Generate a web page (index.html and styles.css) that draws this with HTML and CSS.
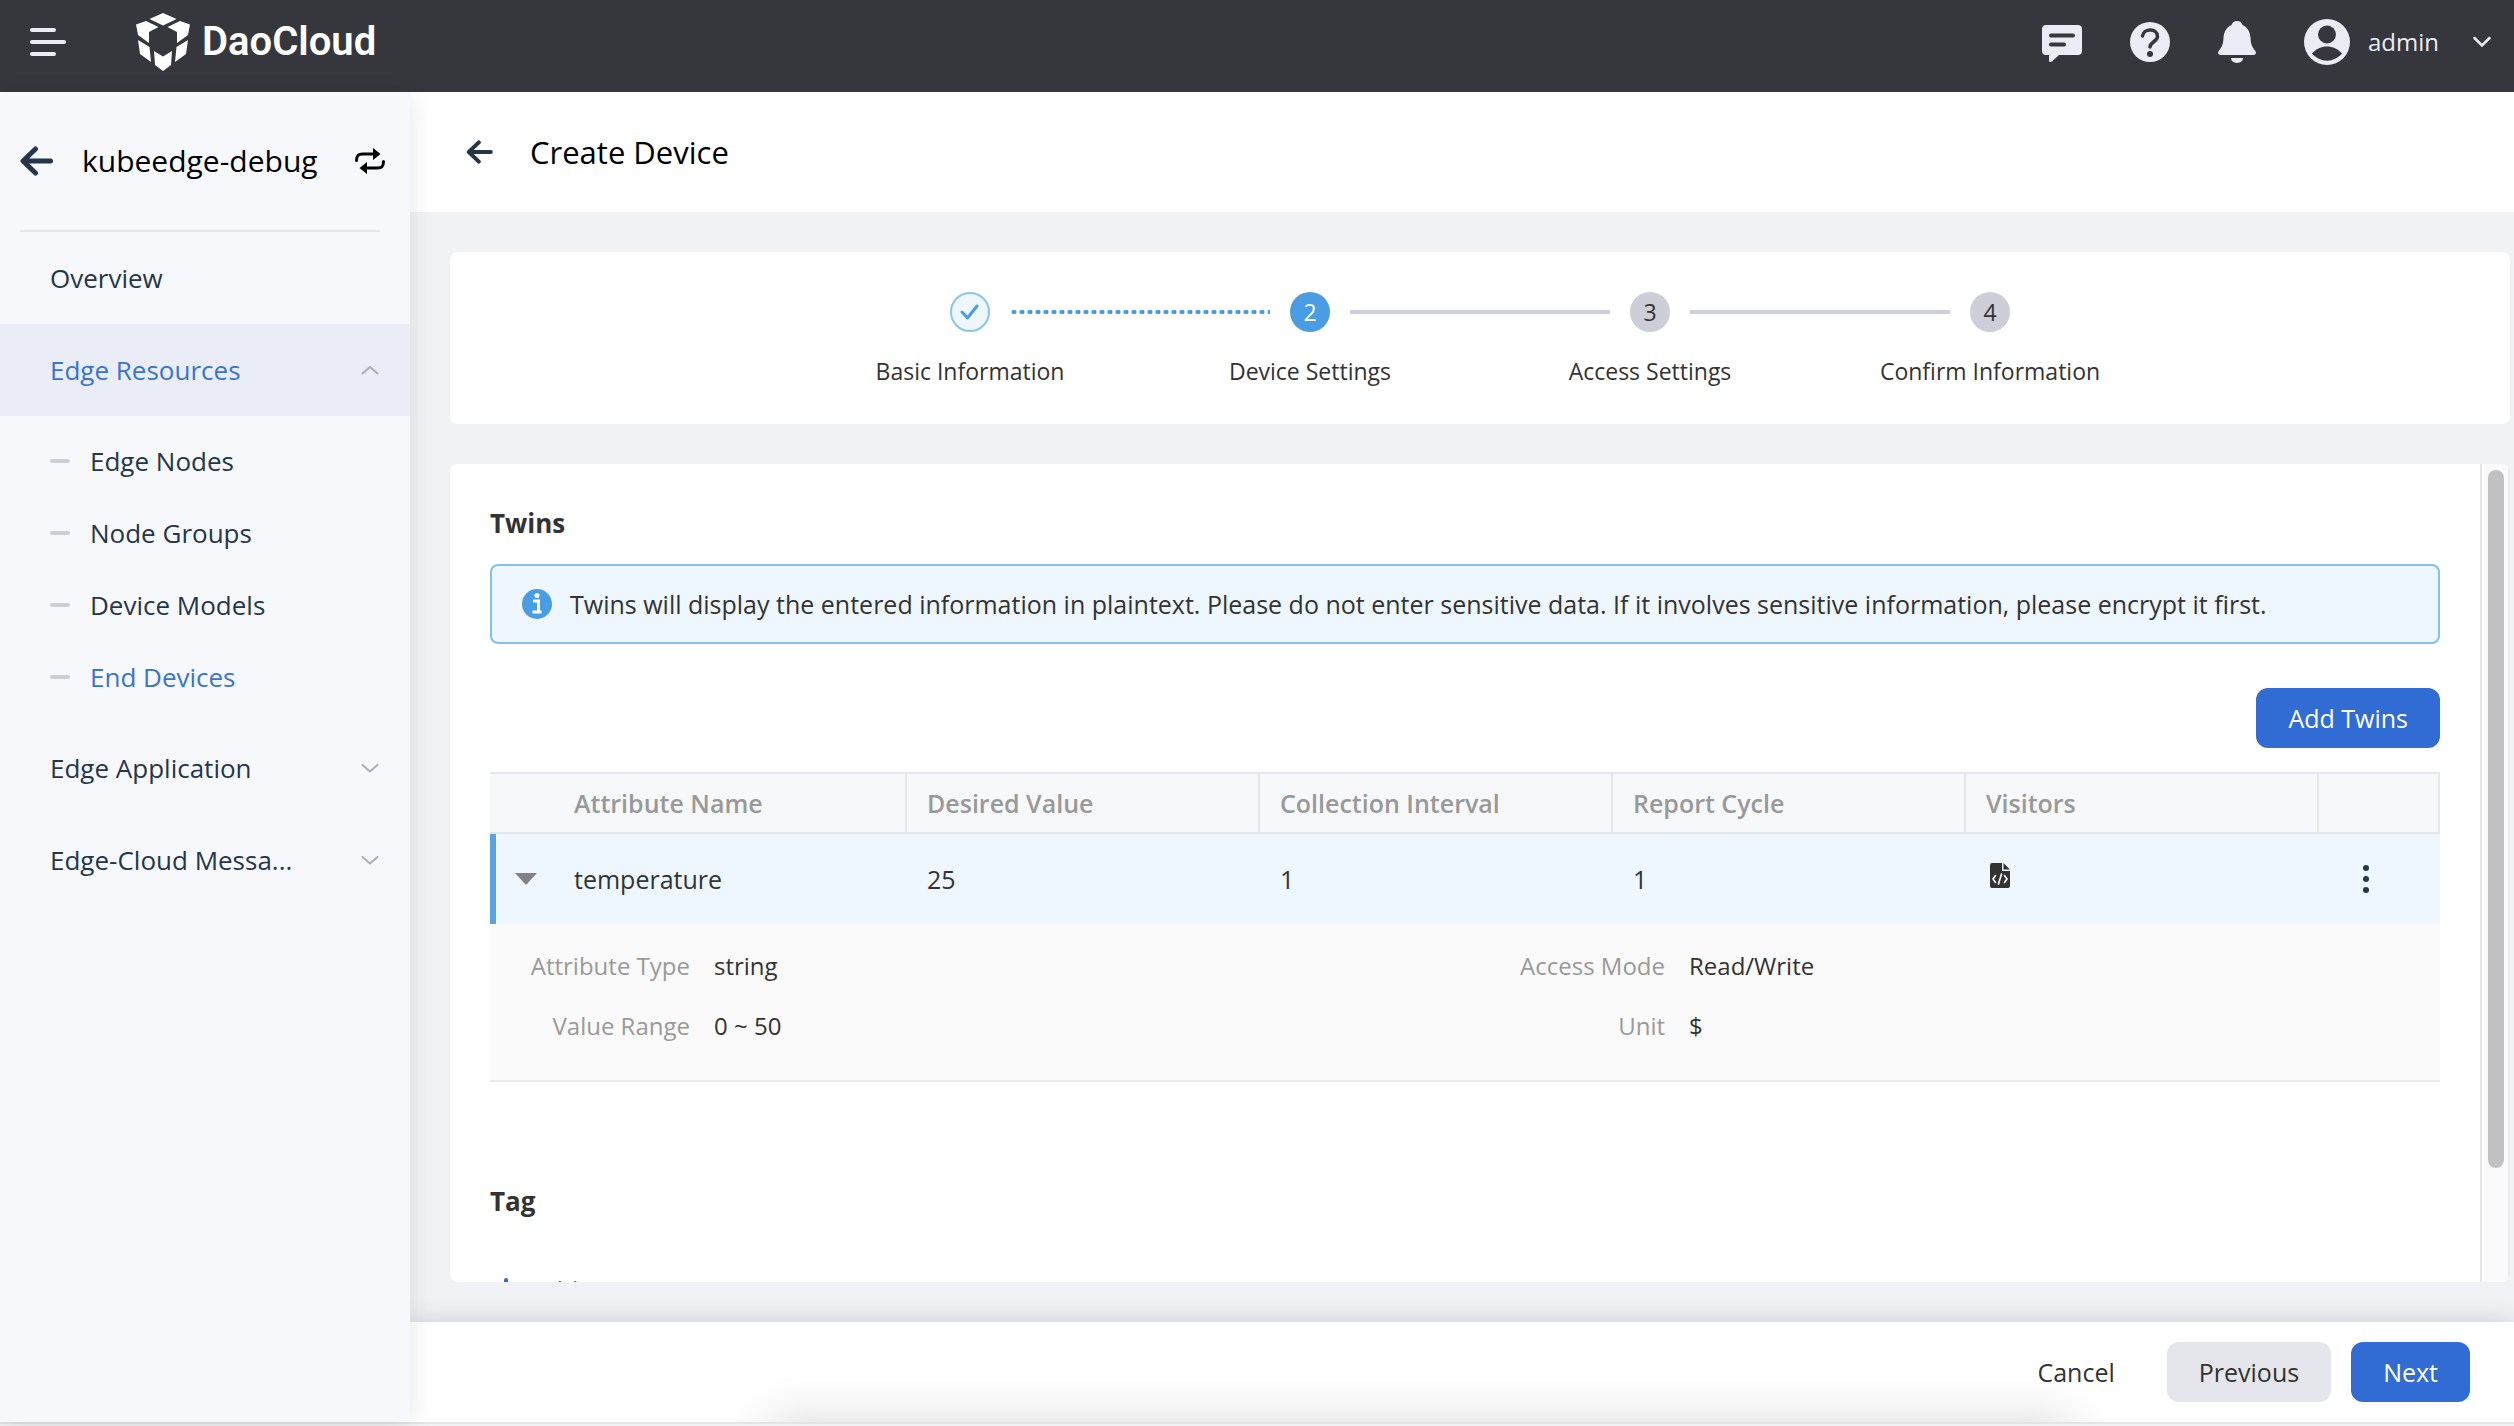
FILE: index.html
```html
<!DOCTYPE html>
<html lang="en">
<head>
    <meta charset="UTF-8">
    <meta name="viewport" content="width=device-width, initial-scale=1.0">
    <title>Create Device - DaoCloud</title>
    <link rel="stylesheet" href="styles.css">
</head>
<body>
    <!-- Top Bar -->
    <header class="topbar">
        <button class="icon-btn menu-btn" aria-label="Menu">
            <svg width="36" height="28" viewBox="0 0 36 28" fill="none" stroke="currentColor" stroke-width="4" stroke-linecap="round"><path d="M2 2h22M2 14h32M2 26h22"/></svg>
        </button>
        <a href="#" class="logo">
            <svg width="54" height="58" viewBox="0 0 54 58" fill="currentColor">
                <path d="M27 0l13.500 6L27 12.500 13.500 6z"/>
                <path d="M10 8l12.500 6-9.500 5v11L2 22 0 11.500z"/>
                <path d="M44 8l-12.500 6 9.500 5v11L52 22l2-10.500z"/>
                <path d="M2 27l11.500 7 1.500 15L4 41z"/>
                <path d="M52 27l-11.500 7L39 49l11-8z"/>
                <path d="M18 38l9 5.500L36 38l-1 14-8 6-8-6z"/>
            </svg>
            <span>DaoCloud</span>
        </a>
        <div class="top-actions">
            <button class="icon-btn" aria-label="Messages">
                <svg width="40" height="40" viewBox="0 0 40 40"><path fill="currentColor" d="M4 3h32a4 4 0 0 1 4 4v22a4 4 0 0 1-4 4H17l-7 6.500c-1.500 1-3 .5-3-1V33H4a4 4 0 0 1-4-4V7a4 4 0 0 1 4-4z"/><path d="M9 13.500h22M9 22.500h13" stroke="#36373c" stroke-width="4" stroke-linecap="round"/></svg>
            </button>
            <button class="icon-btn" aria-label="Help">
                <svg width="40" height="40" viewBox="0 0 40 40" fill="none"><circle cx="20" cy="20" r="20" fill="currentColor"/><path d="M12.500 14c1-8 15-8 15 .5 0 5-7.500 5.500-7.500 10.500" stroke="#36373c" stroke-width="3.500" stroke-linecap="round"/><circle cx="20" cy="32" r="3" fill="#36373c"/></svg>
            </button>
            <button class="icon-btn" aria-label="Notifications">
                <svg width="38" height="42" viewBox="0 0 38 42" fill="currentColor"><path d="M19 0c3 0 4.500 1.500 5.500 4 5.500 2.500 7.500 7 8 13 .4 6 1 8 4.500 12.500 2 2.500.5 4.500-1.500 4.500h-33C.5 34-1 32 1 29.500 4.500 25 5.100 23 5.500 17c.5-6 2.500-10.500 8-13 1-2.500 2.500-4 5.500-4z"/><path d="M13 37h12c0 6.500-12 6.500-12 0z"/></svg>
            </button>
            <button class="icon-btn user-btn">
                <svg width="46" height="46" viewBox="0 0 46 46"><circle cx="23" cy="23" r="23" fill="currentColor"/><circle cx="23" cy="15.500" r="9" fill="#36373c"/><path d="M8 34.500c8-9.500 22-9.500 30 0-8 9.500-22 9.500-30 0z" fill="#36373c"/></svg>
                <span>admin</span>
                <svg class="caret" width="18" height="12" viewBox="0 0 18 12" fill="none" stroke="currentColor" stroke-width="2.500" stroke-linecap="round"><path d="M1.500 2L9 9.500 16.500 2"/></svg>
            </button>
        </div>
    </header>

    <div class="layout">
        <!-- Sidebar -->
        <aside class="sidebar">
            <div class="cluster">
                <a href="#" class="back-link" aria-label="Back">
                    <svg width="34" height="30" viewBox="0 0 34 30" fill="none" stroke="currentColor" stroke-width="5" stroke-linecap="round" stroke-linejoin="round"><path d="M15.500 3L3 15l12.500 12M4 15h26.500"/></svg>
                </a>
                <span class="cluster-name">kubeedge-debug</span>
                <button class="icon-btn" aria-label="Switch cluster">
                    <svg width="30" height="26" viewBox="0 0 30 26" fill="none" stroke="currentColor" stroke-width="3" stroke-linecap="round"><path d="M1.500 12.500C1.500 8 3 6 7.500 6H20M28.500 13.500c0 4.500-1.500 6.500-6 6.500H10"/><path stroke="none" fill="currentColor" d="M18 0l7.500 6-7.500 6zM12 14l-7.500 6 7.500 6z"/></svg>
                </button>
            </div>
            <nav class="menu">
                <a href="#" class="menu-item">Overview</a>
                <a href="#" class="menu-item active">Edge Resources
                    <svg width="18" height="12" viewBox="0 0 18 12"><path d="M1.500 9.500L9 3l7.500 6.500"/></svg>
                </a>
                <div class="submenu">
                    <a href="#">Edge Nodes</a>
                    <a href="#">Node Groups</a>
                    <a href="#">Device Models</a>
                    <a href="#" class="current">End Devices</a>
                </div>
                <a href="#" class="menu-item">Edge Application
                    <svg width="18" height="12" viewBox="0 0 18 12"><path d="M1.500 3L9 9.500 16.500 3"/></svg>
                </a>
                <a href="#" class="menu-item">Edge-Cloud Messa...
                    <svg width="18" height="12" viewBox="0 0 18 12"><path d="M1.500 3L9 9.500 16.500 3"/></svg>
                </a>
            </nav>
        </aside>

        <!-- Page -->
        <div class="page">
            <div class="page-header">
                <a href="#" class="back-link" aria-label="Back">
                    <svg width="28" height="24" viewBox="0 0 34 30" fill="none" stroke="currentColor" stroke-width="5" stroke-linecap="round" stroke-linejoin="round"><path d="M15.500 3L3 15l12.500 12M4 15h26.500"/></svg>
                </a>
                <h1>Create Device</h1>
            </div>

            <main class="content">
                <!-- Steps -->
                <ol class="steps card">
                    <li class="step done">
                        <span class="step-dot"><svg width="20" height="18" viewBox="0 0 20 18" fill="none" stroke="currentColor" stroke-width="3" stroke-linecap="round" stroke-linejoin="round"><path d="M2 9l5.500 6L17 3"/></svg></span>
                        <span class="step-label">Basic Information</span>
                    </li>
                    <li class="step-line dotted"></li>
                    <li class="step now">
                        <span class="step-dot">2</span>
                        <span class="step-label">Device Settings</span>
                    </li>
                    <li class="step-line"></li>
                    <li class="step">
                        <span class="step-dot">3</span>
                        <span class="step-label">Access Settings</span>
                    </li>
                    <li class="step-line"></li>
                    <li class="step">
                        <span class="step-dot">4</span>
                        <span class="step-label">Confirm Information</span>
                    </li>
                </ol>

                <!-- Device Settings Form -->
                <div class="card panel">
                    <div class="panel-body">
                        <h2>Twins</h2>
                        <div class="alert">
                            <svg width="30" height="30" viewBox="0 0 30 30"><circle cx="15" cy="15" r="15" fill="#4a9de3"/><circle cx="15" cy="6.500" r="2.500" fill="#fff"/><path d="M11 12h5.500v10.500M10.500 23h9" stroke="#fff" stroke-width="3" fill="none"/></svg>
                            <span>Twins will display the entered information in plaintext. Please do not enter sensitive data. If it involves sensitive information, please encrypt it first.</span>
                        </div>
                        <div class="toolbar">
                            <button class="btn primary">Add Twins</button>
                        </div>
                        <table class="twins">
                            <colgroup>
                                <col class="col-name"><col><col><col><col><col class="col-menu">
                            </colgroup>
                            <thead>
                                <tr>
                                    <th>Attribute Name</th>
                                    <th>Desired Value</th>
                                    <th>Collection Interval</th>
                                    <th>Report Cycle</th>
                                    <th>Visitors</th>
                                    <th></th>
                                </tr>
                            </thead>
                            <tbody>
                                <tr class="selected">
                                    <td>
                                        <div class="name-cell">
                                            <button class="icon-btn expand" aria-label="Collapse row"><svg width="22" height="12" viewBox="0 0 22 12" fill="#7f828b"><path d="M0 0h22L11 12z"/></svg></button>
                                            <span>temperature</span>
                                        </div>
                                    </td>
                                    <td>25</td>
                                    <td>1</td>
                                    <td>1</td>
                                    <td>
                                        <button class="icon-btn file-btn" aria-label="View visitors"><svg width="20" height="26" viewBox="0 0 20 26"><path fill="#333" d="M2 0h10v8h8v15a2 2 0 0 1-2 2H2a2 2 0 0 1-2-2V2a2 2 0 0 1 2-2zM13.500 0L20 6.500h-6.500z"/><path d="M5.500 12.500L3 16l2.500 3.500M14.500 12.500L17 16l-2.500 3.500M11.500 11L8.500 21" fill="none" stroke="#fff" stroke-width="1.600" stroke-linecap="round"/></svg></button>
                                    </td>
                                    <td class="menu-cell">
                                        <button class="icon-btn" aria-label="More"><svg width="6" height="28" viewBox="0 0 6 28" fill="#25364a"><circle cx="3" cy="3" r="3"/><circle cx="3" cy="14" r="3"/><circle cx="3" cy="25" r="3"/></svg></button>
                                    </td>
                                </tr>
                                <tr class="detail">
                                    <td colspan="6">
                                        <dl>
                                            <dt>Attribute Type</dt><dd>string</dd>
                                            <dt>Access Mode</dt><dd>Read/Write</dd>
                                            <dt>Value Range</dt><dd>0 ~ 50</dd>
                                            <dt>Unit</dt><dd>$</dd>
                                        </dl>
                                    </td>
                                </tr>
                            </tbody>
                        </table>
                        <h2 class="tag-title">Tag</h2>
                        <button class="add-btn">
                            <svg width="24" height="24" viewBox="0 0 24 24" stroke="currentColor" stroke-width="4" stroke-linecap="round"><path d="M12 2v20M2 12h20"/></svg>
                            Add
                        </button>
                    </div>
                    <div class="scrollbar"><div class="thumb"></div></div>
                </div>
            </main>

            <footer class="page-footer">
                <button class="btn text">Cancel</button>
                <button class="btn plain">Previous</button>
                <button class="btn primary">Next</button>
            </footer>
        </div>
    </div>
</body>
</html>
```
FILE: styles.css
```css
/* General Styles */
* {
    box-sizing: border-box;
}

body {
    margin: 0;
    height: 100vh;
    display: flex;
    flex-direction: column;
    overflow: hidden;
    font-family: "Open Sans", "Noto Sans", sans-serif;
    font-size: 25px;
    line-height: 38px;
    color: #333;
    background-color: #f1f2f6;
}

a {
    color: inherit;
    text-decoration: none;
}

button {
    font: inherit;
    color: inherit;
    border: none;
    background: none;
    padding: 0;
    cursor: pointer;
}

svg {
    display: block;
    flex: none;
}

h1, h2 {
    margin: 0;
}

.icon-btn {
    display: flex;
    align-items: center;
}

/* Top Bar */
.topbar {
    flex: none;
    height: 92px;
    padding: 0 23px 8px 30px;
    display: flex;
    align-items: center;
    background-color: #36373c;
    color: #eaedf5;
}

.logo {
    display: flex;
    align-items: center;
    gap: 12px;
    margin-left: 70px;
    color: #fff;
    font-family: Roboto, sans-serif;
    font-size: 40px;
    font-weight: 600;
}

.top-actions {
    display: flex;
    align-items: center;
    gap: 48px;
    margin-left: auto;
}

.user-btn {
    gap: 18px;
    font-size: 24px;
}

.user-btn .caret {
    margin-left: 16px;
}

/* Layout */
.layout {
    flex: 1;
    min-height: 0;
    display: flex;
    margin-bottom: 2px;
    border-bottom: 2px solid #e4e4e4;
}

/* Sidebar */
.sidebar {
    flex: none;
    width: 410px;
    position: relative;
    z-index: 2;
    background-color: #f7f8fc;
    box-shadow: 0 4px 24px rgba(0, 0, 0, 0.1);
}

.cluster {
    height: 140px;
    margin: 0 30px 0 20px;
    display: flex;
    align-items: center;
    border-bottom: 2px solid #e4e6eb;
    color: #000;
    font-size: 30px;
}

.cluster .icon-btn {
    margin-left: auto;
    margin-right: -5px;
}

.cluster-name {
    margin-left: 28px;
}

.back-link {
    color: #25364a;
}

.menu-item {
    height: 92px;
    padding: 0 31px 0 50px;
    display: flex;
    align-items: center;
    justify-content: space-between;
    color: #25364a;
    font-size: 26px;
    font-weight: 500;
}

.menu-item svg {
    fill: none;
    stroke: #a9adb5;
    stroke-width: 2;
    stroke-linecap: round;
}

.menu-item.active {
    background-color: #eaedf5;
    color: #3a74cf;
}

.submenu {
    padding: 9px 0 9px 50px;
}

.submenu a {
    height: 72px;
    display: flex;
    align-items: center;
    gap: 20px;
    color: #25364a;
    font-size: 26px;
    font-weight: 500;
}

.submenu a::before {
    content: "";
    width: 20px;
    height: 4px;
    border-radius: 2px;
    background-color: #cccdd7;
}

.submenu .current {
    color: #3a74cf;
}

/* Page */
.page {
    flex: 1;
    min-width: 0;
    display: flex;
    flex-direction: column;
}

.page-header {
    flex: none;
    height: 120px;
    padding: 0 56px;
    display: flex;
    align-items: center;
    gap: 36px;
    background-color: #fff;
    color: #000;
}

.page-header h1 {
    font-size: 31px;
    font-weight: 500;
}

.content {
    flex: 1;
    min-height: 0;
    padding: 40px 4px 40px 40px;
    display: flex;
    flex-direction: column;
    gap: 40px;
}

.card {
    background-color: #fff;
    border-radius: 8px;
}

/* Steps */
.steps {
    flex: none;
    height: 172px;
    margin: 0;
    padding: 40px 0 0;
    list-style: none;
    display: flex;
    justify-content: center;
    gap: 20px;
    font-size: 23px;
}

.step {
    width: 40px;
    display: flex;
    flex-direction: column;
    align-items: center;
    gap: 20px;
    white-space: nowrap;
}

.step-dot {
    flex: none;
    width: 40px;
    height: 40px;
    display: flex;
    align-items: center;
    justify-content: center;
    border-radius: 50%;
    background-color: #cdced8;
}

.step.now .step-dot {
    background-color: #4a9de3;
    color: #fff;
}

.step.done .step-dot {
    border: 2px solid #8cc4f0;
    background-color: #eef6fe;
    color: #4a9de3;
}

.step-line {
    width: 260px;
    height: 4px;
    margin-top: 18px;
    background-color: #cdced8;
}

.step-line.dotted {
    background: radial-gradient(circle, #4a9de3 2px, transparent 3px) 0 0 / 8px 4px;
}

/* Panel */
.panel {
    flex: 1;
    min-height: 0;
    display: flex;
    overflow: hidden;
}

.panel-body {
    flex: 1;
    min-width: 0;
    padding: 40px;
    overflow: hidden;
}

.panel h2 {
    font-size: 26px;
    font-weight: 700;
    line-height: 38px;
}

.alert {
    height: 80px;
    margin-top: 22px;
    padding: 0 30px;
    display: flex;
    align-items: center;
    gap: 18px;
    border: 2px solid #84bff0;
    border-radius: 8px;
    background-color: #eef6fe;
    white-space: nowrap;
}

.toolbar {
    display: flex;
    justify-content: flex-end;
    margin: 44px 0 24px;
}

.btn {
    height: 60px;
    padding: 0 32px;
    border-radius: 12px;
}

.btn.primary {
    background-color: #316cd4;
    color: #fff;
}

.btn.plain {
    background-color: #e5e6eb;
}

/* Twins Table */
.twins {
    width: 100%;
    table-layout: fixed;
    border-collapse: separate;
    border-spacing: 0;
}

.col-name {
    width: 417px;
}

.col-menu {
    width: 121px;
}

.twins th {
    height: 62px;
    padding: 0 20px;
    border: 2px solid #e4e6eb;
    border-left: none;
    background-color: #f7f8fa;
    color: #999;
    font-weight: 600;
    text-align: left;
}

.twins th:first-child {
    padding-left: 84px;
}

.twins td {
    height: 90px;
    padding: 0 20px;
}

.selected td {
    background-color: #eef6fe;
}

.selected td:first-child {
    padding-left: 0;
    border-left: 6px solid #5aa2e0;
}

.name-cell {
    display: flex;
    align-items: center;
}

.name-cell .expand {
    width: 78px;
    padding-left: 19px;
}

.file-btn {
    margin: 0 0 6px 4px;
}

.selected .menu-cell {
    padding-left: 44px;
}

.twins .detail td {
    height: 158px;
    padding: 12px 0 24px;
    border-bottom: 2px solid #e9eaf0;
    background-color: #fafafa;
}

.detail dl {
    margin: 0;
    display: grid;
    grid-template-columns: 200px 1fr 200px 1fr;
    font-size: 24px;
    line-height: 60px;
}

.detail dt {
    color: #999;
    text-align: right;
}

.detail dd {
    margin: 0;
    padding-left: 24px;
}

.panel .tag-title {
    margin-top: 100px;
}

.add-btn {
    height: 60px;
    margin-top: 40px;
    padding-left: 4px;
    display: flex;
    align-items: center;
    gap: 14px;
    color: #316cd4;
}

/* Scrollbar */
.scrollbar {
    width: 30px;
    padding: 6px 4px 0 6px;
    border-left: 2px solid #e6e6e6;
    border-right: 2px solid #ececec;
    background-color: #fafafa;
}

.thumb {
    width: 16px;
    height: 86%;
    border-radius: 8px;
    background-color: #c1c1c1;
}

/* Footer */
.page-footer {
    flex: none;
    position: relative;
    height: 100px;
    padding: 0 44px;
    display: flex;
    align-items: center;
    justify-content: flex-end;
    gap: 20px;
    background-color: #fff;
    box-shadow: 0 0 24px rgba(0, 0, 0, 0.16);
    clip-path: inset(-40px 0 0 0);
}

/* Soft shadow along the bottom edge */
.page-footer::after {
    content: "";
    position: absolute;
    left: 17%;
    right: 21%;
    bottom: -60px;
    height: 60px;
    box-shadow: 0 0 50px rgba(0, 0, 0, 0.16);
    pointer-events: none;
}
```
